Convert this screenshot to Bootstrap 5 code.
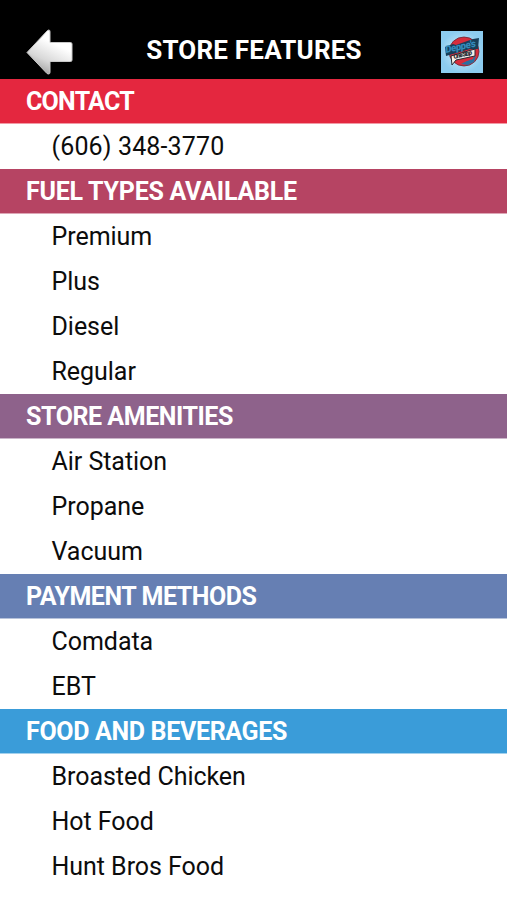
<!DOCTYPE html>
<html lang="en">
<head>
<meta charset="utf-8">
<meta name="viewport" content="width=device-width, initial-scale=1">
<title>Store Features</title>
<link href="https://cdn.jsdelivr.net/npm/bootstrap@5.3.0/dist/css/bootstrap.min.css" rel="stylesheet">
<style>
body{font-family:Roboto,"Liberation Sans",sans-serif;font-size:25px;line-height:45px;color:#0c0c0c;background:#fff}
.app-bar{height:79px;padding:23px 24px 0 25px;background:#000}
.app-title{font-size:26px;line-height:55px;font-weight:700;letter-spacing:.2px;padding-right:8px}
.back-icon,.brand-icon{display:block}
.brand-icon{margin-top:8px}
.back-icon{margin-top:5px}
.section-title{height:45px;padding-left:26px;font-size:25px;line-height:46px;font-weight:700;letter-spacing:-.45px;border-bottom:1px solid #ffffff88}
.tight{letter-spacing:-.75px}.loose{letter-spacing:-.25px}.food{letter-spacing:-.33px}
.feature-list .list-group-item{height:45px;padding:0 0 0 51.5px;line-height:46px;color:inherit;letter-spacing:-.04px}
.feature-list .phone{letter-spacing:.14px}
.tone-1{background:#e4273f}.tone-2{background:#b64463}.tone-3{background:#8e628b}.tone-4{background:#667fb3}.tone-5{background:#3a9cd9}
</style>
</head>
<body class="overflow-hidden">
<header class="app-bar d-flex justify-content-between align-items-start text-white">
  <a href="#" aria-label="Back"><svg class="back-icon" width="50" height="48" viewBox="0 0 50 48">
    <defs><linearGradient id="silver" x1=".25" y1="1" x2=".6" y2=".3"><stop offset="0" stop-color="#999"/><stop offset=".45" stop-color="#d8d8d8"/><stop offset="1" stop-color="#fff"/></linearGradient></defs>
    <path d="M2 24.500 22.500 2.500Q25 1 25 4V14.500H45.500Q47 14.500 47 16V32Q47 33.500 45.500 33.500H25V44Q25 47 22 45.500Z" fill="url(#silver)" stroke="#c8c8c8"/>
  </svg></a>
  <h1 class="app-title m-0">STORE FEATURES</h1>
  <svg class="brand-icon" width="42" height="42" viewBox="0 0 42 42">
    <defs><radialGradient id="sky"><stop offset="0" stop-color="#d9f0fa"/><stop offset="1" stop-color="#8dccef"/></radialGradient></defs>
    <path fill="url(#sky)" d="M0 0h42v42H0z"/>
    <ellipse cx="23" cy="20.500" rx="15" ry="14.500" fill="#d72d3c" stroke="#6b2634" stroke-width=".8"/>
    <path d="M20 33 35 25 33 31 27 34Z" fill="#2870a2"/>
    <path d="M4 16 12 13 15 14 32 8 38 7 37 18 29 18 5 25Z" fill="#173e59"/>
    <text x="5" y="22" transform="rotate(-12 5 22)" font-family="Roboto,sans-serif" font-size="10" font-weight="900" font-style="italic" fill="#348bbb" textLength="31">Deppe's</text>
    <path d="M10 25 34 18 34 25 15 29 11 34Z" fill="#f5eee6" stroke="#252a33" stroke-width="1"/>
    <text x="13" y="28" transform="rotate(-14 13 28)" font-family="Roboto,sans-serif" font-size="6.500" font-weight="900" font-style="italic" fill="#252a33" textLength="19">One Stop</text>
    <path d="M16 32 32 27" stroke="#d72d3c" stroke-width="2"/>
  </svg>
</header>
<main>
  <section>
    <h2 class="section-title tight tone-1 text-white m-0">CONTACT</h2>
    <ul class="list-group list-group-flush feature-list"><li class="list-group-item border-0 phone">(606) 348-3770</li></ul>
  </section>
  <section>
    <h2 class="section-title loose tone-2 text-white m-0">FUEL TYPES AVAILABLE</h2>
    <ul class="list-group list-group-flush feature-list"><li class="list-group-item border-0">Premium</li><li class="list-group-item border-0">Plus</li><li class="list-group-item border-0">Diesel</li><li class="list-group-item border-0">Regular</li></ul>
  </section>
  <section>
    <h2 class="section-title tone-3 text-white m-0">STORE AMENITIES</h2>
    <ul class="list-group list-group-flush feature-list"><li class="list-group-item border-0">Air Station</li><li class="list-group-item border-0">Propane</li><li class="list-group-item border-0">Vacuum</li></ul>
  </section>
  <section>
    <h2 class="section-title tone-4 text-white m-0">PAYMENT METHODS</h2>
    <ul class="list-group list-group-flush feature-list"><li class="list-group-item border-0">Comdata</li><li class="list-group-item border-0">EBT</li></ul>
  </section>
  <section>
    <h2 class="section-title food tone-5 text-white m-0">FOOD AND BEVERAGES</h2>
    <ul class="list-group list-group-flush feature-list"><li class="list-group-item border-0">Broasted Chicken</li><li class="list-group-item border-0">Hot Food</li><li class="list-group-item border-0">Hunt Bros Food</li></ul>
  </section>
</main>
<script src="https://cdn.jsdelivr.net/npm/bootstrap@5.3.0/dist/js/bootstrap.bundle.min.js"></script>
</body>
</html>
